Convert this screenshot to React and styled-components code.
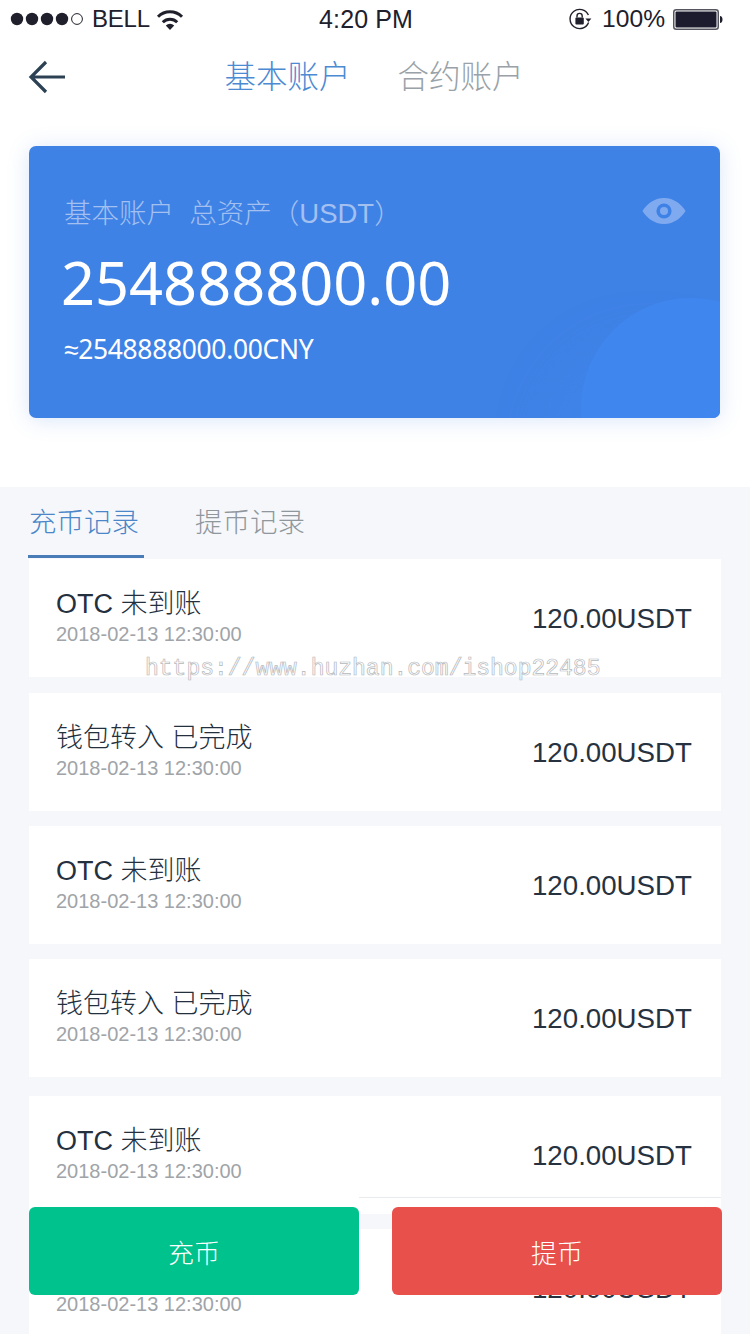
import React from 'react';
import styled, { createGlobalStyle } from 'styled-components';

const Global = createGlobalStyle`
  html, body { margin: 0; padding: 0; background: #fff; }
  body { font-family: "Liberation Sans", "Noto Sans CJK SC", sans-serif; }
  * { box-sizing: border-box; }
`;

const Page = styled.div`
  position: relative;
  width: 750px;
  height: 1334px;
  overflow: hidden;
  background: #fff;
`;

const StatusBar = styled.div`
  position: relative;
  display: grid;
  grid-template-columns: 1fr auto 1fr;
  align-items: center;
  height: 38px;
  padding: 0 27px 0 9px;
  color: #20202c;
  font-size: 24.6px;
`;
const StatusLeft = styled.div`
  display: flex;
  align-items: center;
`;
const Carrier = styled.span`
  margin-left: 7px;
  margin-right: 6px;
  font-size: 24px;
  letter-spacing: -0.2px;
`;
const StatusTime = styled.div`
  font-size: 25px;
  letter-spacing: 0.1px;
`;
const StatusRight = styled.div`
  display: flex;
  align-items: center;
  justify-content: flex-end;
`;
const Percent = styled.span`
  margin: 0 8px 0 9px;
`;

const Nav = styled.div`
  position: relative;
  display: flex;
  justify-content: center;
  align-items: center;
  gap: 47px;
  height: 76px;
  padding: 2px 0 0 0;
  margin-right: 2px;
`;
const NavTab = styled.div`
  font-size: 31.5px;
  line-height: 40px;
  font-weight: 300;
  color: ${p => (p.$active ? '#4c8ad3' : '#98a2a8')};
`;
const Back = styled.svg`
  position: absolute;
  left: 28px;
  top: 22px;
`;

const Hero = styled.div`
  position: relative;
  margin: 32px 30px 0 29px;
  height: 272px;
  padding: 44px 34px 0 35px;
  border-radius: 7px;
  background: #3f82e6;
  box-shadow: 0 2px 22px rgba(70, 130, 225, 0.2);
  overflow: hidden;
`;
const HeroCircle = styled.div`
  position: absolute;
  left: 552px;
  top: 152px;
  width: 220px;
  height: 220px;
  border-radius: 50%;
  background: #3f86ee;
  box-shadow: -40px 40px 40px rgba(64, 134, 236, 0.5);
`;
const HeroTop = styled.div`
  position: relative;
  display: flex;
  justify-content: space-between;
  align-items: center;
  height: 42px;
`;
const HeroLabel = styled.div`
  font-size: 27.5px;
  font-weight: 300;
  color: #a3c0f0;
  white-space: pre;
`;
const HeroAmount = styled.div`
  position: relative;
  margin: 15px 0 0 -3px;
  font-family: "Noto Sans", sans-serif;
  font-size: 59.5px;
  line-height: 70px;
  color: #fff;
`;
const HeroSub = styled.div`
  position: relative;
  margin-top: 14px;
  font-family: "Noto Sans", sans-serif;
  font-size: 26.4px;
  line-height: 36px;
  color: #fff;
  letter-spacing: -0.3px;
`;

const Records = styled.div`
  margin-top: 69px;
  height: 847px;
  padding: 0 29px;
  background: #f5f7fb;
`;
const Tabs = styled.div`
  display: flex;
  gap: 56px;
  height: 72px;
  padding-top: 16px;
`;
const RecordTab = styled.div`
  position: relative;
  font-size: 27.5px;
  line-height: 40px;
  font-weight: 300;
  color: ${p => (p.$active ? '#4a86c8' : '#8f979d')};
  ${p =>
    p.$active &&
    `&::after {
      content: '';
      position: absolute;
      left: -1px;
      right: -5px;
      top: 52px;
      height: 3px;
      background: #4a7cb8;
    }`}
`;
const Row = styled.div`
  position: relative;
  display: flex;
  justify-content: space-between;
  align-items: center;
  margin-top: ${p => p.$gap}px;
  height: ${p => p.$height || 118}px;
  padding: 0 29px 0 27px;
  background: #fff;
  ${p => p.$line && 'box-shadow: inset 0 -1px 0 #fff; border-bottom: 0;'}
`;
const RowMain = styled.div`
  display: flex;
  flex-direction: column;
  margin-top: -2px;
`;
const RowTitle = styled.div`
  font-size: 27px;
  line-height: 38px;
  font-weight: 300;
  color: #24303e;
  white-space: pre;
`;
const RowTime = styled.div`
  margin-top: -4px;
  font-size: 20px;
  line-height: 30px;
  color: #a0a4a8;
`;
const RowAmount = styled.div`
  margin-top: 2px;
  font-size: 27.7px;
  color: #26323f;
`;
const RowLine = styled.div`
  position: absolute;
  left: 330px;
  right: 0;
  top: 101px;
  height: 1px;
  background: #e9ecef;
`;

const Watermark = styled.div`
  position: absolute;
  left: 145px;
  top: 655px;
  font-family: "Liberation Mono", monospace;
  font-size: 23px;
  line-height: 28px;
  color: rgba(255, 255, 255, 0.75);
  -webkit-text-stroke: 0.7px #b4b8bc;
  white-space: nowrap;
`;

const Actions = styled.div`
  position: absolute;
  left: 29px;
  right: 29px;
  top: 1207px;
  display: flex;
  justify-content: space-between;
`;
const ActionButton = styled.div`
  display: flex;
  align-items: center;
  justify-content: center;
  width: 330px;
  height: 88px;
  margin-right: ${p => (p.$red ? '-1px' : '0')};
  border-radius: 6px;
  font-size: 26px;
  font-weight: 300;
  color: #fff;
  background: ${p => (p.$red ? '#e8504c' : '#00c28c')};
`;

const Signal = () => (
  <svg width="76" height="16" viewBox="0 0 76 16">
    {[8, 23, 38, 53].map(x => (
      <circle key={x} cx={x} cy="8" r="6.2" fill="#20202c" />
    ))}
    <circle cx="68" cy="8" r="5.4" fill="none" stroke="#20202c" strokeWidth="1" />
  </svg>
);

const Wifi = () => (
  <svg width="28" height="21" viewBox="0 0 28 21">
    <path d="M14 21 9.8 16.4a6 6 0 0 1 8.4 0Z" fill="#20202c" />
    <path d="M6.8 13.2a10.2 10.2 0 0 1 14.4 0" fill="none" stroke="#20202c" strokeWidth="3" />
    <path d="M2 7.8a17 17 0 0 1 24 0" fill="none" stroke="#20202c" strokeWidth="3" />
  </svg>
);

const RotationLock = () => (
  <svg width="24" height="22" viewBox="0 0 24 22">
    <path d="M19.6 14.5A9.6 9.6 0 1 1 19.4 7" fill="none" stroke="#20202c" strokeWidth="1.4" />
    <path d="M16.4 10.4h6l-3 3.6Z" fill="#20202c" />
    <rect x="6.4" y="9.6" width="8.4" height="6.8" rx="1" fill="#20202c" />
    <path d="M8 9.6V8a2.6 2.6 0 0 1 5.2 0v1.6" fill="none" stroke="#20202c" strokeWidth="1.4" />
  </svg>
);

const Battery = () => (
  <svg width="50" height="21" viewBox="0 0 50 21">
    <rect x="0.75" y="0.75" width="44.5" height="19.5" rx="2.5" fill="none" stroke="#55555f" strokeWidth="1.5" />
    <rect x="2.5" y="2.5" width="41" height="16" rx="1" fill="#1c1c2e" />
    <path d="M47 7c1.6 0 2.5 1.400 2.500 3.500S48.600 14 47 14Z" fill="#20202c" />
  </svg>
);

const Eye = () => (
  <svg width="44" height="28" viewBox="0 0 44 28">
    <path
      d="M22 1C32 1 39.500 7.500 43.500 14 39.500 20.500 32 27 22 27S4.500 20.500.5 14C4.500 7.500 12 1 22 1Z"
      fill="#80aaf0"
    />
    <circle cx="22" cy="14" r="7.600" fill="#3f82e6" />
    <circle cx="22" cy="14" r="4" fill="#80aaf0" />
  </svg>
);

const rows = [
  { title: 'OTC 未到账', gap: 0 },
  { title: '钱包转入 已完成', gap: 16 },
  { title: 'OTC 未到账', gap: 15 },
  { title: '钱包转入 已完成', gap: 15 },
  { title: 'OTC 未到账', gap: 19, line: true },
  { title: '钱包转入 已完成', gap: 15 },
];

export default function App() {
  return (
    <Page>
      <Global />
      <StatusBar>
        <StatusLeft>
          <Signal />
          <Carrier>BELL</Carrier>
          <Wifi />
        </StatusLeft>
        <StatusTime>4:20 PM</StatusTime>
        <StatusRight>
          <RotationLock />
          <Percent>100%</Percent>
          <Battery />
        </StatusRight>
      </StatusBar>
      <Nav>
        <Back width="40" height="34" viewBox="0 0 40 34">
          <path
            d="M18 2 3 17l15 15M3 17h34"
            fill="none"
            stroke="#2c4254"
            strokeWidth="3.200"
          />
        </Back>
        <NavTab $active>基本账户</NavTab>
        <NavTab>合约账户</NavTab>
      </Nav>
      <Hero>
        <HeroCircle />
        <HeroTop>
          <HeroLabel>基本账户  总资产（USDT）</HeroLabel>
          <Eye />
        </HeroTop>
        <HeroAmount>254888800.00</HeroAmount>
        <HeroSub>≈2548888000.00CNY</HeroSub>
      </Hero>
      <Records>
        <Tabs>
          <RecordTab $active>充币记录</RecordTab>
          <RecordTab>提币记录</RecordTab>
        </Tabs>
        {rows.map((r, i) => (
          <Row key={i} $gap={r.gap}>
            <RowMain>
              <RowTitle>{r.title}</RowTitle>
              <RowTime>2018-02-13 12:30:00</RowTime>
            </RowMain>
            <RowAmount>120.00USDT</RowAmount>
            {r.line && <RowLine />}
          </Row>
        ))}
      </Records>
      <Watermark>https://www.huzhan.com/ishop22485</Watermark>
      <Actions>
        <ActionButton>充币</ActionButton>
        <ActionButton $red>提币</ActionButton>
      </Actions>
    </Page>
  );
}
